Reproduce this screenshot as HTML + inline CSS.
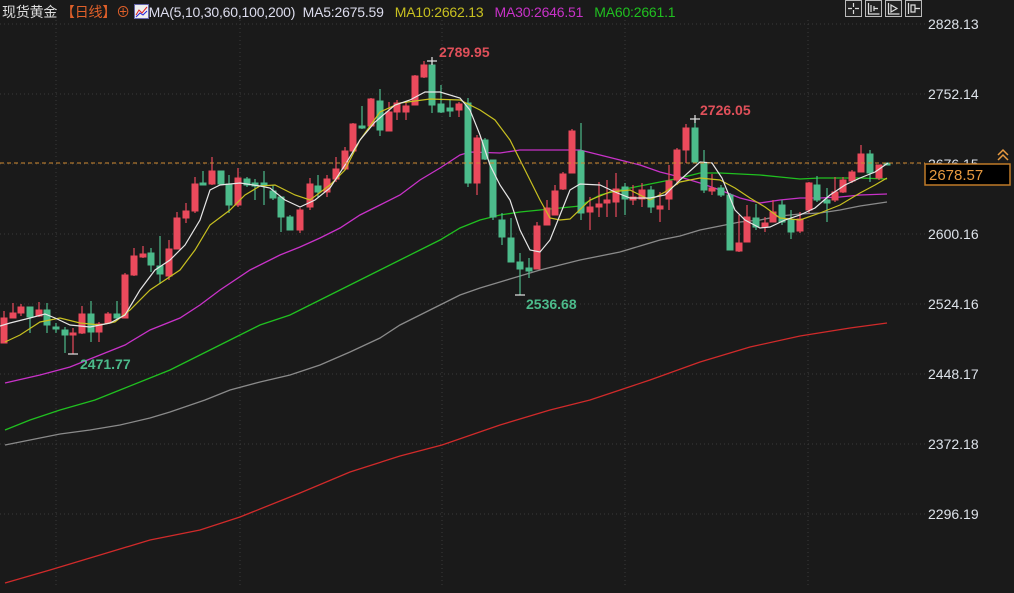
<!DOCTYPE html>
<html><head><meta charset="utf-8"><style>
html,body{margin:0;padding:0;background:#1a1a1a;width:1014px;height:593px;overflow:hidden;font-family:"Liberation Sans","Noto Sans CJK SC",sans-serif}
svg{position:absolute;left:0;top:0}
.r{fill:#ea4a5c;stroke:#ea4a5c}.g{fill:#4cbb8b;stroke:#4cbb8b}
line.r,line.g{stroke-width:1.2}
.hd{position:absolute;top:2px;left:2px;font-size:14px;white-space:nowrap;color:#ddd;letter-spacing:-0.2px}
.ax{font-size:14px;fill:#dde3ea}
</style></head><body>
<svg width="1014" height="593" viewBox="0 0 1014 593">
<rect width="1014" height="593" fill="#1a1a1a"/>
<g stroke="#3a3a3a" stroke-dasharray="1,3" stroke-width="1">
<line x1="0" y1="24" x2="925" y2="24"/><line x1="0" y1="94" x2="925" y2="94"/><line x1="0" y1="164" x2="925" y2="164"/><line x1="0" y1="234" x2="925" y2="234"/><line x1="0" y1="304" x2="925" y2="304"/><line x1="0" y1="374" x2="925" y2="374"/><line x1="0" y1="444" x2="925" y2="444"/><line x1="0" y1="514" x2="925" y2="514"/>
<line x1="56" y1="20" x2="56" y2="585"/><line x1="240" y1="20" x2="240" y2="585"/><line x1="442" y1="20" x2="442" y2="585"/><line x1="625" y1="20" x2="625" y2="585"/><line x1="808" y1="20" x2="808" y2="585"/>
</g>
<g fill="none" stroke-width="1.3">
<polyline stroke="#d02a2a" points="5,583 50,570 100,555 150,540 200,530 240,517 300,493 350,472 400,456 442,445 500,425 550,410 590,400 650,380 700,362 750,347 800,336 850,328 887,323"/>
<polyline stroke="#8a8a8a" points="5,445 30,440 60,434 90,430 120,425 150,418 170,412 205,400 230,390 260,382 290,375 320,365 350,352 380,338 400,325 420,315 440,305 460,295 480,288 500,282 520,276 540,270 560,265 580,260 600,256 620,252 640,246 660,240 680,236 700,230 720,226 740,222 760,220 780,216 800,214 820,213 840,210 860,206 887,202"/>
<polyline stroke="#20c020" points="5,430 30,420 60,410 95,400 120,390 150,378 170,370 200,355 230,340 260,325 290,315 320,300 350,285 380,270 400,260 420,250 440,240 460,228 480,220 500,215 520,212 540,210 560,208 580,206 600,195 620,190 640,186 660,182 680,178 700,173 720,173 740,174 760,175 780,177 800,179 820,178 840,178 860,178 887,179"/>
<polyline stroke="#c832c8" points="5,383 40,375 70,367 100,355 125,345 150,330 180,318 200,305 220,290 250,270 280,255 300,247 320,238 340,228 360,215 380,205 400,195 420,180 440,168 460,155 470,152 500,153 520,150 540,150 560,150 580,150 600,155 620,160 640,165 660,172 680,177 700,183 720,190 740,198 760,203 780,200 800,198 820,198 840,197 860,195 887,194"/>
</g>
<g>
<line class="r" x1="4" y1="311" x2="4" y2="343"/><rect class="r" x="1" y="318" width="6" height="25"/>
<line class="r" x1="13" y1="303" x2="13" y2="318"/><rect class="r" x="10" y="313" width="6" height="5"/>
<line class="r" x1="21" y1="304" x2="21" y2="316"/><rect class="r" x="18" y="307" width="6" height="6"/>
<line class="g" x1="30" y1="307" x2="30" y2="333"/><rect class="g" x="27" y="307" width="6" height="10"/>
<line class="r" x1="39" y1="302" x2="39" y2="317"/><rect class="r" x="36" y="310" width="6" height="6"/>
<line class="g" x1="47" y1="303" x2="47" y2="333"/><rect class="g" x="44" y="310" width="6" height="15"/>
<line class="g" x1="56" y1="323" x2="56" y2="333"/><rect class="g" x="53" y="327" width="6" height="2"/>
<line class="g" x1="65" y1="327" x2="65" y2="353"/><rect class="g" x="62" y="330" width="6" height="5"/>
<line class="r" x1="73" y1="328" x2="73" y2="354"/><rect class="r" x="70" y="333" width="6" height="2"/>
<line class="r" x1="82" y1="306" x2="82" y2="334"/><rect class="r" x="79" y="314" width="6" height="19"/>
<line class="g" x1="91" y1="301" x2="91" y2="342"/><rect class="g" x="88" y="314" width="6" height="18"/>
<line class="r" x1="99" y1="322" x2="99" y2="342"/><rect class="r" x="96" y="324" width="6" height="8"/>
<line class="r" x1="108" y1="312" x2="108" y2="323"/><rect class="r" x="105" y="314" width="6" height="9"/>
<line class="g" x1="117" y1="301" x2="117" y2="320"/><rect class="g" x="114" y="314" width="6" height="4"/>
<line class="r" x1="125" y1="273" x2="125" y2="318"/><rect class="r" x="122" y="275" width="6" height="43"/>
<line class="r" x1="134" y1="248" x2="134" y2="276"/><rect class="r" x="131" y="256" width="6" height="19"/>
<line class="r" x1="143" y1="246" x2="143" y2="258"/><rect class="r" x="140" y="254" width="6" height="3"/>
<line class="g" x1="151" y1="248" x2="151" y2="272"/><rect class="g" x="148" y="253" width="6" height="12"/>
<line class="g" x1="160" y1="236" x2="160" y2="284"/><rect class="g" x="157" y="266" width="6" height="8"/>
<line class="r" x1="169" y1="240" x2="169" y2="280"/><rect class="r" x="166" y="249" width="6" height="27"/>
<line class="r" x1="177" y1="212" x2="177" y2="249"/><rect class="r" x="174" y="218" width="6" height="31"/>
<line class="r" x1="186" y1="203" x2="186" y2="223"/><rect class="r" x="183" y="211" width="6" height="7"/>
<line class="r" x1="195" y1="177" x2="195" y2="213"/><rect class="r" x="192" y="184" width="6" height="27"/>
<line class="g" x1="203" y1="171" x2="203" y2="185"/><rect class="g" x="200" y="183" width="6" height="2"/>
<line class="r" x1="212" y1="157" x2="212" y2="185"/><rect class="r" x="209" y="171" width="6" height="13"/>
<line class="g" x1="221" y1="171" x2="221" y2="185"/><rect class="g" x="218" y="171" width="6" height="13"/>
<line class="g" x1="229" y1="175" x2="229" y2="213"/><rect class="g" x="226" y="184" width="6" height="21"/>
<line class="r" x1="238" y1="168" x2="238" y2="207"/><rect class="r" x="235" y="178" width="6" height="27"/>
<line class="g" x1="247" y1="177" x2="247" y2="187"/><rect class="g" x="244" y="179" width="6" height="6"/>
<line class="g" x1="255" y1="179" x2="255" y2="200"/><rect class="g" x="252" y="183" width="6" height="3"/>
<line class="g" x1="264" y1="171" x2="264" y2="205"/><rect class="g" x="261" y="183" width="6" height="2"/>
<line class="g" x1="273" y1="185" x2="273" y2="200"/><rect class="g" x="270" y="191" width="6" height="7"/>
<line class="g" x1="281" y1="197" x2="281" y2="232"/><rect class="g" x="278" y="197" width="6" height="20"/>
<line class="g" x1="290" y1="215" x2="290" y2="230"/><rect class="g" x="287" y="217" width="6" height="13"/>
<line class="r" x1="300" y1="208" x2="300" y2="233"/><rect class="r" x="297" y="210" width="6" height="20"/>
<line class="r" x1="310" y1="178" x2="310" y2="210"/><rect class="r" x="307" y="184" width="6" height="23"/>
<line class="g" x1="318" y1="175" x2="318" y2="197"/><rect class="g" x="315" y="186" width="6" height="6"/>
<line class="r" x1="327" y1="175" x2="327" y2="197"/><rect class="r" x="324" y="179" width="6" height="13"/>
<line class="r" x1="336" y1="157" x2="336" y2="182"/><rect class="r" x="333" y="169" width="6" height="10"/>
<line class="r" x1="345" y1="147" x2="345" y2="170"/><rect class="r" x="342" y="151" width="6" height="18"/>
<line class="r" x1="353" y1="123" x2="353" y2="152"/><rect class="r" x="350" y="124" width="6" height="27"/>
<line class="g" x1="362" y1="106" x2="362" y2="129"/><rect class="g" x="359" y="126" width="6" height="2"/>
<line class="r" x1="371" y1="98" x2="371" y2="127"/><rect class="r" x="368" y="99" width="6" height="27"/>
<line class="g" x1="380" y1="89" x2="380" y2="136"/><rect class="g" x="377" y="101" width="6" height="29"/>
<line class="r" x1="389" y1="102" x2="389" y2="131"/><rect class="r" x="386" y="112" width="6" height="19"/>
<line class="r" x1="397" y1="100" x2="397" y2="120"/><rect class="r" x="394" y="103" width="6" height="9"/>
<line class="r" x1="406" y1="102" x2="406" y2="120"/><rect class="r" x="403" y="106" width="6" height="6"/>
<line class="r" x1="415" y1="75" x2="415" y2="105"/><rect class="r" x="412" y="76" width="6" height="29"/>
<line class="r" x1="424" y1="61" x2="424" y2="78"/><rect class="r" x="421" y="65" width="6" height="12"/>
<line class="g" x1="432" y1="61" x2="432" y2="113"/><rect class="g" x="429" y="65" width="6" height="40"/>
<line class="g" x1="441" y1="85" x2="441" y2="113"/><rect class="g" x="438" y="104" width="6" height="8"/>
<line class="g" x1="450" y1="100" x2="450" y2="117"/><rect class="g" x="447" y="108" width="6" height="3"/>
<line class="r" x1="459" y1="102" x2="459" y2="117"/><rect class="r" x="456" y="104" width="6" height="6"/>
<line class="g" x1="468" y1="98" x2="468" y2="187"/><rect class="g" x="465" y="103" width="6" height="80"/>
<line class="r" x1="477" y1="135" x2="477" y2="195"/><rect class="r" x="474" y="138" width="6" height="45"/>
<line class="g" x1="485" y1="138" x2="485" y2="160"/><rect class="g" x="482" y="140" width="6" height="19"/>
<line class="g" x1="493" y1="160" x2="493" y2="220"/><rect class="g" x="490" y="160" width="6" height="57"/>
<line class="g" x1="502" y1="213" x2="502" y2="245"/><rect class="g" x="499" y="220" width="6" height="17"/>
<line class="g" x1="511" y1="218" x2="511" y2="262"/><rect class="g" x="508" y="238" width="6" height="24"/>
<line class="g" x1="520" y1="253" x2="520" y2="295"/><rect class="g" x="517" y="262" width="6" height="7"/>
<line class="g" x1="529" y1="258" x2="529" y2="278"/><rect class="g" x="526" y="268" width="6" height="3"/>
<line class="r" x1="537" y1="222" x2="537" y2="269"/><rect class="r" x="534" y="226" width="6" height="43"/>
<line class="r" x1="547" y1="200" x2="547" y2="225"/><rect class="r" x="544" y="208" width="6" height="17"/>
<line class="r" x1="555" y1="185" x2="555" y2="215"/><rect class="r" x="552" y="191" width="6" height="24"/>
<line class="r" x1="563" y1="172" x2="563" y2="190"/><rect class="r" x="560" y="174" width="6" height="15"/>
<line class="r" x1="572" y1="129" x2="572" y2="173"/><rect class="r" x="569" y="131" width="6" height="42"/>
<line class="g" x1="581" y1="123" x2="581" y2="220"/><rect class="g" x="578" y="151" width="6" height="62"/>
<line class="r" x1="590" y1="197" x2="590" y2="230"/><rect class="r" x="587" y="207" width="6" height="5"/>
<line class="r" x1="599" y1="182" x2="599" y2="217"/><rect class="r" x="596" y="204" width="6" height="3"/>
<line class="r" x1="607" y1="180" x2="607" y2="217"/><rect class="r" x="604" y="200" width="6" height="3"/>
<line class="r" x1="616" y1="173" x2="616" y2="217"/><rect class="r" x="613" y="189" width="6" height="13"/>
<line class="g" x1="625" y1="183" x2="625" y2="215"/><rect class="g" x="622" y="187" width="6" height="12"/>
<line class="r" x1="633" y1="185" x2="633" y2="205"/><rect class="r" x="630" y="197" width="6" height="3"/>
<line class="r" x1="642" y1="183" x2="642" y2="207"/><rect class="r" x="639" y="190" width="6" height="9"/>
<line class="g" x1="651" y1="186" x2="651" y2="213"/><rect class="g" x="648" y="190" width="6" height="17"/>
<line class="r" x1="660" y1="192" x2="660" y2="222"/><rect class="r" x="657" y="206" width="6" height="3"/>
<line class="r" x1="669" y1="165" x2="669" y2="210"/><rect class="r" x="666" y="181" width="6" height="18"/>
<line class="r" x1="677" y1="148" x2="677" y2="185"/><rect class="r" x="674" y="150" width="6" height="30"/>
<line class="r" x1="686" y1="124" x2="686" y2="163"/><rect class="r" x="683" y="128" width="6" height="22"/>
<line class="g" x1="695" y1="119" x2="695" y2="163"/><rect class="g" x="692" y="128" width="6" height="34"/>
<line class="g" x1="704" y1="150" x2="704" y2="193"/><rect class="g" x="701" y="163" width="6" height="27"/>
<line class="r" x1="712" y1="174" x2="712" y2="195"/><rect class="r" x="709" y="188" width="6" height="3"/>
<line class="g" x1="721" y1="185" x2="721" y2="197"/><rect class="g" x="718" y="188" width="6" height="7"/>
<line class="g" x1="730" y1="193" x2="730" y2="250"/><rect class="g" x="727" y="195" width="6" height="55"/>
<line class="r" x1="739" y1="215" x2="739" y2="252"/><rect class="r" x="736" y="243" width="6" height="8"/>
<line class="r" x1="747" y1="205" x2="747" y2="242"/><rect class="r" x="744" y="217" width="6" height="25"/>
<line class="g" x1="756" y1="204" x2="756" y2="230"/><rect class="g" x="753" y="218" width="6" height="9"/>
<line class="r" x1="765" y1="217" x2="765" y2="232"/><rect class="r" x="762" y="223" width="6" height="4"/>
<line class="r" x1="773" y1="200" x2="773" y2="222"/><rect class="r" x="770" y="212" width="6" height="10"/>
<line class="g" x1="782" y1="200" x2="782" y2="225"/><rect class="g" x="779" y="205" width="6" height="17"/>
<line class="g" x1="791" y1="210" x2="791" y2="239"/><rect class="g" x="788" y="220" width="6" height="12"/>
<line class="r" x1="800" y1="212" x2="800" y2="233"/><rect class="r" x="797" y="219" width="6" height="12"/>
<line class="r" x1="809" y1="182" x2="809" y2="213"/><rect class="r" x="806" y="183" width="6" height="27"/>
<line class="g" x1="817" y1="176" x2="817" y2="202"/><rect class="g" x="814" y="185" width="6" height="15"/>
<line class="g" x1="827" y1="188" x2="827" y2="222"/><rect class="g" x="824" y="200" width="6" height="3"/>
<line class="r" x1="835" y1="177" x2="835" y2="202"/><rect class="r" x="832" y="192" width="6" height="8"/>
<line class="r" x1="843" y1="177" x2="843" y2="193"/><rect class="r" x="840" y="180" width="6" height="12"/>
<line class="r" x1="852" y1="170" x2="852" y2="183"/><rect class="r" x="849" y="172" width="6" height="9"/>
<line class="r" x1="861" y1="145" x2="861" y2="172"/><rect class="r" x="858" y="154" width="6" height="18"/>
<line class="g" x1="870" y1="150" x2="870" y2="182"/><rect class="g" x="867" y="154" width="6" height="19"/>
<line class="r" x1="879" y1="165" x2="879" y2="180"/><rect class="r" x="876" y="165" width="6" height="13"/>
<rect class="g" x="884" y="163" width="6" height="2"/>
</g>
<g fill="none" stroke-width="1.2">
<polyline stroke="#c8c020" points="5,342 20,335 40,322 60,318 80,323 100,325 115,322 130,310 150,290 165,280 180,270 195,250 210,225 230,210 245,195 260,186 275,185 295,195 310,200 330,185 345,170 360,140 380,112 400,103 430,99 460,100 480,110 495,120 510,140 525,170 540,200 550,218 560,220 570,219 590,200 610,192 630,190 650,200 665,192 680,182 700,178 720,180 735,188 750,198 765,207 780,218 800,220 820,213 840,205 860,193 875,185 887,178"/>
<polyline stroke="#e6e6e6" points="0,326 10,323 30,318 45,314 55,318 70,325 90,327 110,323 125,315 140,290 155,270 170,260 185,245 200,220 210,190 220,185 240,183 260,186 270,188 285,200 300,207 315,200 330,188 345,165 360,140 375,122 395,105 410,100 425,92 440,92 460,98 470,110 480,135 490,165 500,185 510,200 520,230 530,250 540,252 550,240 560,215 570,190 580,184 600,185 615,192 630,198 650,198 665,195 680,180 700,162 712,163 722,178 735,210 745,220 760,228 770,227 785,220 800,215 815,208 830,195 845,185 860,178 875,172 888,163"/>
</g>
<g stroke="#e6e6e6" stroke-width="1.2"><line x1="427" y1="61" x2="437" y2="61"/><line x1="432" y1="57" x2="432" y2="65"/><line x1="690" y1="119" x2="700" y2="119"/><line x1="695" y1="115" x2="695" y2="123"/><line x1="515" y1="295" x2="525" y2="295"/><line x1="68" y1="354" x2="78" y2="354"/></g>
<line x1="0" y1="163" x2="925" y2="163" stroke="#d08a30" stroke-dasharray="4,3" stroke-width="1"/>
<g font-family="Liberation Sans,sans-serif" font-size="14" font-weight="bold">
<text x="439" y="57" fill="#e0505a">2789.95</text>
<text x="700" y="115" fill="#e0505a">2726.05</text>
<text x="526" y="309" fill="#4cbb8b">2536.68</text>
<text x="80" y="369" fill="#4cbb8b">2471.77</text>
</g>
<g class="ax" font-family="Liberation Sans,sans-serif">
<text x="928" y="29">2828.13</text><text x="928" y="99">2752.14</text><text x="928" y="169">2676.15</text><text x="928" y="239">2600.16</text><text x="928" y="309">2524.16</text><text x="928" y="379">2448.17</text><text x="928" y="449">2372.18</text><text x="928" y="519">2296.19</text>
</g>
<rect x="925" y="164" width="85" height="21" fill="#000" stroke="#c07a28" stroke-width="1.5"/>
<text x="929" y="180" fill="#e89a40" font-size="15" font-family="Liberation Sans,sans-serif">2678.57</text>
<path d="M998 160 l5 -5 l5 5 M998 155 l5 -5 l5 5" stroke="#e89a40" fill="none" stroke-width="1.5"/>
<g stroke="#bbb" fill="#222" stroke-width="1">
<rect x="845.5" y="0.5" width="16" height="16"/><rect x="865.5" y="0.5" width="16" height="16"/><rect x="885.5" y="0.5" width="16" height="16"/><rect x="905.5" y="0.5" width="16" height="16"/>
</g>
<g stroke="#ddd" stroke-width="1.2" fill="none">
<path d="M853.5 3v4M853.5 10v4M848 8.5h4M855 8.5h4"/>
<path d="M868.5 3v11h11M871 5v7M874 6v5M874 8.5h4"/>
<path d="M888.5 3v11h11M891 5v7l6 -3.5z"/>
<path d="M908.5 3v11M911 5h4v7h-4zM915 8.5h5"/>
</g>
</svg>
<div class="hd"><span style="color:#ddd">现货黄金</span> <span style="color:#e0602a">【日线】</span><span style="color:#e0602a">⊕</span> <span style="display:inline-block;width:13px;height:13px;background:#eee;border:1px solid #66a;vertical-align:-2px;position:relative"><svg width="13" height="13" style="position:absolute;left:0;top:0"><polyline points="1,10 4,5 7,8 12,2" stroke="#d22" fill="none"/><polyline points="1,12 5,8 8,10 12,6" stroke="#22d" fill="none"/></svg></span><span style="color:#dde">MA(5,10,30,60,100,200)</span>&nbsp; <span style="color:#dde">MA5:2675.59</span>&nbsp;&nbsp; <span style="color:#c8c020">MA10:2662.13</span>&nbsp;&nbsp; <span style="color:#c832c8">MA30:2646.51</span>&nbsp;&nbsp; <span style="color:#20c020">MA60:2661.1</span></div>
</body></html>
